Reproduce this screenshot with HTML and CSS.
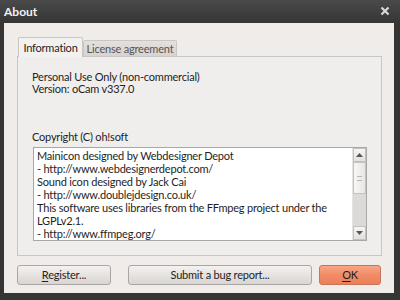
FILE: index.html
```html
<!DOCTYPE html>
<html lang="en">
<head>
  <meta charset="UTF-8" />
  <title>About</title>
  <link rel="stylesheet" href="styles.css">
</head>
<body>
  <div class="window">
    <div class="titlebar">
      <span class="title">About</span>
      <svg class="close" width="10" height="10" viewBox="0 0 10 10">
        <path d="M1.5 1.5 L8.5 8.5 M8.5 1.5 L1.5 8.5" stroke="#d8d8d8" stroke-width="2.2" />
      </svg>
    </div>
    <div class="client">
      <div class="tabs">
        <div class="tab active">Information</div>
        <div class="tab">License agreement</div>
      </div>
      <div class="panel">
        <div class="info">
          <div>Personal Use Only (non-commercial)</div>
          <div>Version: oCam v337.0</div>
        </div>
        <div class="copyright">Copyright (C) oh!soft</div>
        <div class="textbox">
          <div class="credits">
            <div>Mainicon designed by Webdesigner Depot</div>
            <div>- http://www.webdesignerdepot.com/</div>
            <div>Sound icon designed by Jack Cai</div>
            <div>- http://www.doublejdesign.co.uk/</div>
            <div>This software uses libraries from the FFmpeg project under the LGPLv2.1.</div>
            <div>- http://www.ffmpeg.org/</div>
          </div>
          <div class="scrollbar">
            <div class="arrow">
              <svg width="7" height="4" viewBox="0 0 7 4"><path d="M0 4 L3.5 0 L7 4 Z" fill="#555" /></svg>
            </div>
            <div class="thumb"><span class="grip"></span></div>
            <div class="track"></div>
            <div class="arrow">
              <svg width="7" height="4" viewBox="0 0 7 4"><path d="M0 0 L3.5 4 L7 0 Z" fill="#555" /></svg>
            </div>
          </div>
        </div>
      </div>
      <div class="buttons">
        <button class="btn register"><u>R</u>egister...</button>
        <button class="btn submit">Submit a bug report...</button>
        <button class="btn ok"><u>O</u>K</button>
      </div>
    </div>
  </div>
</body>
</html>
```
FILE: styles.css
```css
body {
  margin: 0;
  background: #353535;
  font-family: Lato, "Noto Sans", sans-serif;
  font-size: 11px;
  letter-spacing: -0.2px;
  color: #1e1e1e;
}
.window {
  width: 400px;
  height: 300px;
  display: flex;
  flex-direction: column;
  background: linear-gradient(#4a4a4a, #353535 23px, #353535);
}
.titlebar {
  height: 23px;
  display: flex;
  align-items: center;
  justify-content: space-between;
  padding: 0 10px 0 4px;
}
.title {
  color: #f2f2f2;
  font-weight: bold;
  font-size: 12px;
  letter-spacing: 0;
}
.close {
  margin-top: -2px;
}
.client {
  flex: 1;
  margin: 0 6px 7px 4px;
  background: #efecea;
  padding: 13px 12px 0 13px;
  display: flex;
  flex-direction: column;
}
.tabs {
  display: flex;
  align-items: flex-end;
  height: 20px;
  padding-left: 1px;
  position: relative;
  z-index: 1;
}
.tab {
  border: 1px solid #c9c6c4;
  border-bottom: none;
  background: linear-gradient(#e3e0de, #d6d3d1);
  color: #555;
  width: 94px;
  box-sizing: border-box;
  text-align: center;
  white-space: nowrap;
  height: 16px;
  line-height: 16px;
  border-radius: 2px 2px 0 0;
}
.tab.active {
  background: #f3f1ef;
  color: #1e1e1e;
  width: 65px;
  height: 20px;
  line-height: 20px;
  margin-bottom: -1px;
}
.panel {
  height: 200px;
  border: 1px solid #c9c6c4;
  background: #f0eeec;
  padding: 14px 14px 0 14px;
  box-sizing: border-box;
  display: flex;
  flex-direction: column;
}
.info {
  line-height: 12px;
}
.copyright {
  margin-top: 36px;
  line-height: 12px;
}
.textbox {
  margin-top: 4px;
  margin-left: 1px;
  width: 334px;
  height: 94px;
  box-sizing: border-box;
  border: 1px solid #a9a7a5;
  background: #fff;
  display: flex;
}
.credits {
  flex: 1;
  padding: 1px 0 0 3px;
  line-height: 13px;
  overflow: hidden;
}
.scrollbar {
  width: 13px;
  display: flex;
  flex-direction: column;
  background: #dcdad8;
  border-left: 1px solid #e6e4e2;
}
.arrow {
  height: 14px;
  display: flex;
  align-items: center;
  justify-content: center;
  background: linear-gradient(#f6f5f4, #e2e0de);
  border: 1px solid #c4c2c0;
  box-sizing: border-box;
}
.thumb {
  height: 32px;
  background: linear-gradient(90deg, #f8f7f6, #e8e6e4);
  border: 1px solid #c4c2c0;
  box-sizing: border-box;
  display: flex;
  align-items: center;
  justify-content: center;
}
.grip {
  width: 5px;
  height: 3px;
  border-top: 1px solid #b8b6b4;
  border-bottom: 1px solid #b8b6b4;
}
.track {
  flex: 1;
}
.buttons {
  display: flex;
  margin-top: 9px;
  height: 20px;
}
.btn {
  height: 20px;
  font-family: inherit;
  font-size: 11px;
  letter-spacing: -0.2px;
  color: #1e1e1e;
  border: 1px solid #a9a6a4;
  border-radius: 3px;
  background: linear-gradient(#f4f2f1, #e6e3e1 50%, #d8d5d3);
  padding: 0;
  line-height: 16px;
}
.btn u {
  text-underline-offset: 2px;
}
.register {
  width: 94px;
}
.submit {
  width: 184px;
  margin-left: 17px;
}
.ok {
  width: 62px;
  margin-left: 7px;
  background: linear-gradient(#f9a584, #f18c68 50%, #ec7f5a);
  border-color: #c7765a;
}
```
